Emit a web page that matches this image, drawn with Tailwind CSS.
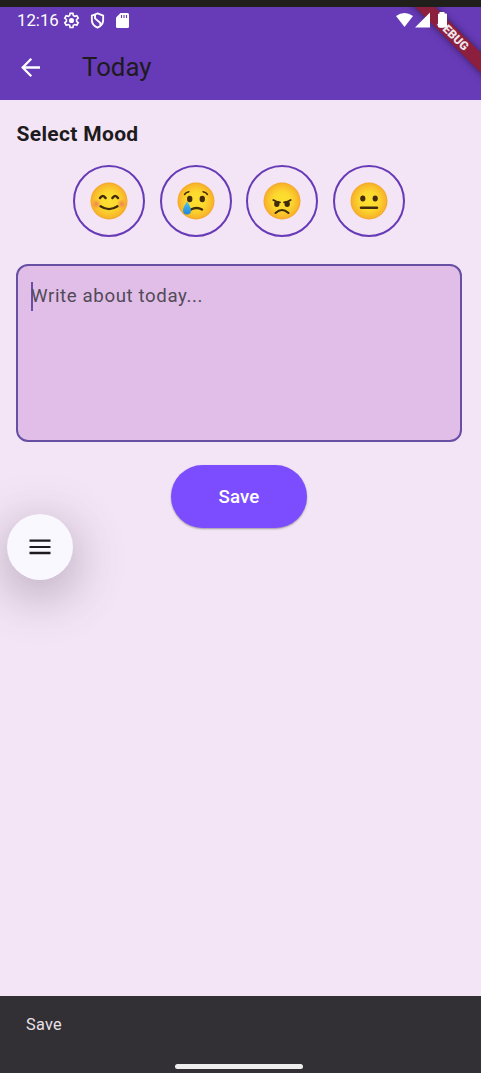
<!DOCTYPE html>
<html lang="en">
<head>
<meta charset="utf-8">
<title>Today</title>
<script src="https://cdn.jsdelivr.net/npm/@tailwindcss/browser@4"></script>
</head>
<body class="bg-[#f3e5f5]">
<svg class="absolute size-0">
  <defs>
    <radialGradient id="face" cx=".5" cy=".5" r=".5"><stop offset="0" stop-color="#fde030"/><stop offset=".5" stop-color="#fcd82e"/><stop offset=".9" stop-color="#f8b62b"/><stop offset="1" stop-color="#f4a32a"/></radialGradient>
    <radialGradient id="blush"><stop offset="0" stop-color="#ef7a55" stop-opacity=".85"/><stop offset="1" stop-color="#ef7a55" stop-opacity="0"/></radialGradient>
    <linearGradient id="tear" x2="0" y2="1"><stop offset="0" stop-color="#4fc3f7"/><stop offset="1" stop-color="#1e88d8"/></linearGradient>
  </defs>
</svg>
<div class="relative flex h-[1073px] w-[481px] flex-col overflow-hidden bg-[#f3e5f5] font-[Roboto,sans-serif] text-[#1d1b20]">
  <div class="h-[7px] bg-[#211f1c]"></div>
  <header class="relative h-[93px] overflow-hidden bg-[#673ab7]">
    <!-- debug ribbon -->
    <div class="absolute left-[393px] top-[21px] flex h-[14px] w-[120px] rotate-45 items-center justify-center bg-[#8c1f3d] text-[12px] font-black leading-none text-[#efe4ea] shadow-[0_0_7px_rgba(0,0,0,0.5)]">DEBUG</div>
    <div class="relative flex h-[27px] items-center pl-[17px] text-white">
      <span class="w-[43px] text-[16.800px] leading-[27px]">12:16</span>
      <svg class="ml-[3px]" width="17" height="17" viewBox="0 0 24 24" fill="none" stroke="#fff" stroke-width="2.300"><path d="M10 2h4l.6 3 2 1.2 2.9-1 2 3.4-2.300 2v2.600l2.300 2-2 3.500-2.900-1-2 1.200-.6 3h-4l-.6-3-2-1.200-2.900 1-2-3.500 2.300-2v-2.600l-2.300-2 2-3.400 2.900 1 2-1.200z"/><circle cx="12" cy="12" r="3.600" fill="#fff" stroke="none"/></svg>
      <svg class="ml-[9px]" width="17" height="17" viewBox="0 0 24 24" fill="none" stroke="#fff" stroke-width="2.600"><path d="M12 2l8 3v6c0 5-3 9-8 11-5-2-8-6-8-11V5z"/><path d="M8.500 4v5l7.500 6.500v3"/></svg>
      <svg class="ml-[10px]" width="13" height="15" viewBox="0 0 13 15"><path fill="#fff" d="M4.500 0H11.500Q13 0 13 1.500V13.500Q13 15 11.500 15H1.500Q0 15 0 13.500V4.500z"/><path stroke="#673ab7" stroke-width="1.100" d="M5.500 2v3M8 2v3M10.500 2v3"/></svg>
      <svg class="absolute left-[395px] top-[5px]" width="54" height="17" viewBox="0 0 54 17" fill="#fff"><path d="M1 4Q9.500-2 18 4L9.500 15z"/><path d="M20 15.500L35 .5v15z"/><path d="M44.500 0h5v1.500H51q1 0 1 1V14.500q0 1-1 1h-7q-1 0-1-1V2.500q0-1 1-1h.5z"/></svg>
    </div>
    <div class="flex h-[66px] items-center pl-[21px]">
      <svg width="19" height="19" viewBox="0 0 19 19" fill="none" stroke="#fff" stroke-width="2.300"><path d="M10.300.8L1.700 9.500l8.600 8.700M1.700 9.500H19"/></svg>
      <h1 class="ml-[42px] text-[25.800px] leading-[30px]">Today</h1>
    </div>
  </header>
  <main class="flex w-[478px] flex-1 flex-col px-[16px] pt-[20px]">
    <h2 class="pl-[0.500px] text-[21px] font-bold leading-[29px] tracking-[0.330px]">Select Mood</h2>
    <div class="mt-[16px] flex justify-center gap-[14.400px]">
      <div class="flex size-[72px] items-center justify-center rounded-full border-2 border-[#673ab7]">
        <svg width="38" height="38" viewBox="0 0 38 38"><circle cx="19" cy="19" r="18.500" fill="url(#face)"/><circle cx="6.500" cy="22" r="4.800" fill="url(#blush)"/><circle cx="31.500" cy="22" r="4.800" fill="url(#blush)"/><g fill="none" stroke="#422b0d" stroke-linecap="round"><path stroke-width="2.500" d="M10 16q2.800-4 5.600 0M22.400 16q2.800-4 5.600 0"/><path stroke-width="2.300" d="M10.500 24.300q8.500 5.500 17 0"/></g></svg>
      </div>
      <div class="flex size-[72px] items-center justify-center rounded-full border-2 border-[#673ab7]">
        <svg width="38" height="38" viewBox="0 0 38 38"><circle cx="19" cy="19" r="18.500" fill="url(#face)"/><g fill="#422b0d"><ellipse cx="12.700" cy="17" rx="2.700" ry="3.200"/><ellipse cx="25.300" cy="17" rx="2.700" ry="3.200"/></g><g fill="none" stroke="#422b0d" stroke-linecap="round"><path stroke-width="1.400" d="M7.500 12.500q1.500-2.300 4.500-2.800M30.500 12.500q-1.500-2.300-4.500-2.800"/><path stroke-width="2.500" d="M14 27.500q5.500-3 11 0"/></g><path fill="url(#tear)" d="M10 19.500q4 6 4 9a4 4 0 0 1-8 0q0-3 4-9z"/></svg>
      </div>
      <div class="flex size-[72px] items-center justify-center rounded-full border-2 border-[#673ab7]">
        <svg width="38" height="38" viewBox="0 0 38 38"><circle cx="19" cy="19" r="18.500" fill="url(#face)"/><g fill="#422b0d"><ellipse cx="13.800" cy="22" rx="2.700" ry="3"/><ellipse cx="24.200" cy="22" rx="2.700" ry="3"/></g><g fill="none" stroke="#422b0d" stroke-linecap="round"><path stroke-width="1.800" d="M10.300 18q3 2.300 6.700 2.300M27.700 18q-3 2.300-6.700 2.300"/><path stroke-width="2" d="M12.500 31q6.500-6 13 0"/></g></svg>
      </div>
      <div class="flex size-[72px] items-center justify-center rounded-full border-2 border-[#673ab7]">
        <svg width="38" height="38" viewBox="0 0 38 38"><circle cx="19" cy="19" r="18.500" fill="url(#face)"/><g fill="#422b0d"><ellipse cx="12.800" cy="16.500" rx="2.600" ry="3"/><ellipse cx="25.200" cy="16.500" rx="2.600" ry="3"/></g><path stroke="#422b0d" stroke-width="2.400" stroke-linecap="round" d="M11 25.700h16"/></svg>
      </div>
    </div>
    <div class="mt-[27px] flex h-[178px] rounded-[12px] border-2 border-[#6750a4] bg-[#e1bee7] pl-[13px] pt-[16px]">
      <div class="h-[29px] w-[2px] bg-[#6750a4]"></div>
      <p class="-ml-[2px] text-[18.700px] leading-[29px] tracking-[0.600px] text-[#524a58]">Write about today...</p>
    </div>
    <button class="mt-[23px] h-[63px] w-[136px] self-center rounded-full bg-[#7c4dff] pt-[2px] text-[18.700px] font-medium tracking-[0.120px] text-white shadow-[0_1px_2px_rgba(0,0,0,0.35)]">Save</button>
  </main>
  <footer class="flex h-[77px] flex-col justify-between bg-[#322f35] pt-[17px] pb-[4px] text-[#e8e2e8]">
    <span class="pl-[26px] text-[16.300px] leading-[24px] tracking-[0.290px]">Save</span>
    <div class="ml-[175px] h-[5px] w-[128px] rounded-full bg-[#eeeeee]"></div>
  </footer>
  <!-- floating menu button -->
  <button class="absolute left-[7px] top-[514px] flex size-[66px] items-center justify-center rounded-full bg-[#f9f8ff] shadow-[0_13px_48px_rgba(30,10,35,0.25),0_12px_75px_rgba(30,10,35,0.10)]">
    <svg width="22" height="16" viewBox="0 0 22 16" fill="#1d1b20"><path d="M.5.500h21v2.300H.5zM.5 6.900h21v2.200H.5zM.5 12.800h21v2.400H.5z"/></svg>
  </button>
</div>
</body>
</html>
